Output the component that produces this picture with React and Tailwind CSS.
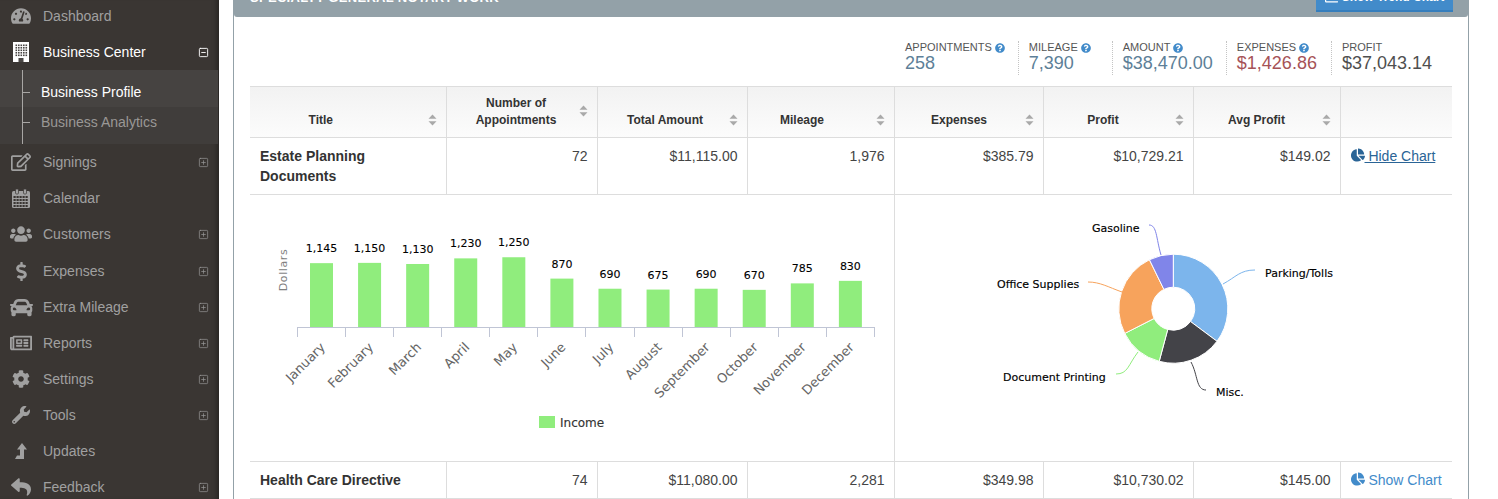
import React from "react";
import {
  FaTachometerAlt, FaRegEdit, FaUsers, FaDollarSign, FaCar,
  FaRegNewspaper, FaCog, FaWrench, FaReply, FaChartPie, FaQuestionCircle, FaRegChartBar,
} from "react-icons/fa";
import { SquarePlus, SquareMinus } from "lucide-react";

const BuildingIcon = () => (
  <svg width="16" height="20" viewBox="0 0 16 20">
    <rect width="16" height="20" fill="#fff" />
    <rect x="2" y="2" width="12" height="13" fill="#fff" />
    {[2.5, 5, 7.5, 10, 12.5].map((y) =>
      [2.5, 5, 7.5, 10, 12.5].map((x) => <rect key={`${x}-${y}`} x={x} y={y} width="1.6" height="1.6" fill="#4a4745" />)
    )}
    <rect x="5.5" y="16" width="5" height="4" fill="#4a4745" />
  </svg>
);

const CalendarIcon = () => (
  <svg width="18" height="19" viewBox="0 0 18 19">
    <rect y="2" width="18" height="17" rx="1.5" fill="currentColor" />
    <rect x="3.5" y="0" width="3" height="5" rx="1" fill="currentColor" stroke="#3a3633" strokeWidth="0.7" />
    <rect x="11.5" y="0" width="3" height="5" rx="1" fill="currentColor" stroke="#3a3633" strokeWidth="0.7" />
    {[7, 10, 13, 16].map((y) =>
      [1.5, 4.5, 7.5, 10.5, 13.5].map((x) => <rect key={`${x}-${y}`} x={x} y={y} width="2.2" height="2" fill="#3a3633" />)
    )}
  </svg>
);

const UpdatesIcon = () => (
  <svg width="12" height="16" viewBox="0 0 12 16">
    <path d="M7 0 L12 6.5 H9 V16 H0 L2 12.5 H5 V6.5 H2 Z" fill="currentColor" />
  </svg>
);

const menuTop = [
  { label: "Dashboard", icon: <FaTachometerAlt size={20} /> },
  { label: "Business Center", icon: <BuildingIcon />, active: true },
];

const menuBottom = [
  { label: "Signings", icon: <FaRegEdit size={20} />, plus: true },
  { label: "Calendar", icon: <CalendarIcon /> },
  { label: "Customers", icon: <FaUsers size={22} />, plus: true, extra: "mb-px" },
  { label: "Expenses", icon: <FaDollarSign size={19} />, plus: true },
  { label: "Extra Mileage", icon: <FaCar size={23} />, plus: true },
  { label: "Reports", icon: <FaRegNewspaper size={22} />, plus: true },
  { label: "Settings", icon: <FaCog size={18} />, plus: true },
  { label: "Tools", icon: <FaWrench size={18} />, plus: true },
  { label: "Updates", icon: <UpdatesIcon /> },
  { label: "Feedback", icon: <FaReply size={20} />, plus: true },
];

const MenuItem = ({ item }) => (
  <div className={`flex h-9 items-center text-sm ${item.active ? "text-white" : "text-[#a0a0a0]"} ${item.extra || ""}`}>
    <span className="flex w-[43px] justify-center pl-px pr-[2px]">{item.icon}</span>
    <span className="flex-1">{item.label}</span>
    {item.active && <SquareMinus size={11} strokeWidth={2} className="mr-[10px]" />}
    {item.plus && <SquarePlus size={11} strokeWidth={1.5} className="mr-[10px] text-[#999]" />}
  </div>
);

const Sidebar = () => (
  <aside className="-mt-[2px] h-[501px] w-[219px] shrink-0 bg-[#3a3633] shadow-[inset_-5px_0_5px_-3px_rgba(0,0,0,0.35)]">
    {menuTop.map((item) => <MenuItem key={item.label} item={item} />)}
    <div className="relative mr-px text-sm">
      <div className="absolute bottom-0 left-[22px] top-0 w-px bg-[#a8a6a4]" />
      <div className="h-[37px] bg-[#464341] pl-[41px] pt-3 leading-5 text-white">
        <span className="absolute left-[22px] top-[22px] h-px w-2 bg-[#a8a6a4]" />
        Business Profile
      </div>
      <div className="h-[37px] bg-[#403d3b] pl-[41px] pt-[5px] leading-5 text-[#9a9896]">
        <span className="absolute left-[22px] top-[52px] h-px w-2 bg-[#a8a6a4]" />
        Business Analytics
      </div>
    </div>
    {menuBottom.map((item) => <MenuItem key={item.label} item={item} />)}
  </aside>
);

const stats = [
  { label: "Appointments", value: "258", color: "text-[#5d7f98]", pr: "pr-[13px]", help: true },
  { label: "Mileage", value: "7,390", color: "text-[#5d7f98]", pr: "pr-[21px]", help: true },
  { label: "Amount", value: "$38,470.00", color: "text-[#5d7f98]", pr: "pr-[13px]", help: true },
  { label: "Expenses", value: "$1,426.86", color: "text-[#a65257]", pr: "pr-[14px]", help: true },
  { label: "Profit", value: "$37,043.14", color: "text-[#4f4f4f]", pr: "pr-[21px]" },
];

const Stats = () => (
  <div className="flex h-[69px] justify-end pt-6">
    {stats.map((s, i) => (
      <div
        key={s.label}
        className={`h-[34px] pl-[10px] ${i > 0 ? "border-l border-dotted border-[#c4c4c4]" : ""} ${s.pr}`}
      >
        <div className="flex items-center gap-[3px] text-[11px] uppercase leading-[13px] text-[#555]">
          {s.label}
          {s.help && <FaQuestionCircle size={10} className="text-[#428bca]" />}
        </div>
        <div className={`text-lg leading-[19px] ${s.color}`}>{s.value}</div>
      </div>
    ))}
  </div>
);

const SortIcon = ({ className }) => (
  <svg width="9" height="12" viewBox="0 0 9 12" className={`absolute right-[9px] ${className}`}>
    <path d="M4.5 0.5 L8.5 4.8 L0.5 4.8 Z M0.5 7.2 L8.5 7.2 L4.5 11.5 Z" fill="#a9a9a9" />
  </svg>
);

const columns = [
  { label: "Title", pr: "pr-[54px]" },
  { label: "Number of Appointments", pr: "pr-[11px]", iconTop: "top-[18px]" },
  { label: "Total Amount", pr: "pr-[14px]" },
  { label: "Mileage", pr: "pr-[37px]" },
  { label: "Expenses", pr: "pr-[19px]" },
  { label: "Profit", pr: "pr-[30px]" },
  { label: "Avg Profit", pr: "pr-[20px]" },
];

const Num = ({ children }) => (
  <td className="border border-[#ddd] px-[9px] pt-2 text-right align-top text-[#444]">{children}</td>
);

const Cell = ({ children }) => (
  <td className="border border-[#ddd] px-[9px] text-right text-[#444]">{children}</td>
);

const bars = [
  ["January", 1145, "1,145"], ["February", 1150, "1,150"], ["March", 1130, "1,130"], ["April", 1230, "1,230"],
  ["May", 1250, "1,250"], ["June", 870, "870"], ["July", 690, "690"], ["August", 675, "675"],
  ["September", 690, "690"], ["October", 670, "670"], ["November", 785, "785"], ["December", 830, "830"],
];

const chartFont = "'DejaVu Sans', sans-serif";

// coordinates in both charts are page pixels, the viewBox moves them into the cell
const BarChart = () => (
  <svg width="644" height="266" viewBox="250 195 644 266" className="block" fontFamily={chartFont}>
    <text
      transform="translate(287 270) rotate(-90)"
      textAnchor="middle"
      fontSize="11"
      letterSpacing="0.6"
      fill="#808080"
    >
      Dollars
    </text>
    {bars.map(([month, value, label], i) => {
      const x = 310 + i * 48.08;
      const h = value * 0.0562;
      const top = 327.5 - h;
      return (
        <g key={month}>
          <rect x={x} y={top} width="23" height={h} fill="#90ed7d" />
          <text x={x + 11.5} y={top - 11} textAnchor="middle" fontSize="11" fill="#000" stroke="#000" strokeWidth="0.1">
            {label}
          </text>
          <text transform={`translate(${x + 16} 348) rotate(-45)`} textAnchor="end" fontSize="13" fill="#666">
            {month}
          </text>
        </g>
      );
    })}
    <path d="M297 327.5 H875" stroke="#c0c5d5" fill="none" />
    {Array.from({ length: 13 }, (_, i) => (
      <path key={i} d={`M${Math.round(297 + i * 48.08) + 0.5} 327 V337`} stroke="#c0c5d5" fill="none" />
    ))}
    <rect x="539" y="416" width="16" height="12" fill="#90ed7d" />
    <text x="560" y="427" fontSize="12" fill="#333" stroke="#333" strokeWidth="0.15">Income</text>
  </svg>
);

const slices = [
  { from: 0, to: 126.7, fill: "#7cb5ec" },
  { from: 126.7, to: 195, fill: "#434348" },
  { from: 195, to: 243, fill: "#90ed7d" },
  { from: 243, to: 334, fill: "#f7a35c" },
  { from: 334, to: 360, fill: "#8085e9" },
];

const point = (angle, r) => {
  const rad = (angle * Math.PI) / 180;
  return `${(1173.3 + r * Math.sin(rad)).toFixed(2)} ${(308.7 - r * Math.cos(rad)).toFixed(2)}`;
};

const slicePath = ({ from, to }) => {
  const large = to - from > 180 ? 1 : 0;
  return `M${point(from, 54.5)} A54.5 54.5 0 ${large} 1 ${point(to, 54.5)} L${point(to, 21.5)} A21.5 21.5 0 ${large} 0 ${point(from, 21.5)} Z`;
};

const pieLabels = [
  { text: "Gasoline", x: 1092, y: 232, d: "M1149 225 C1157 225 1156 238 1161 255", color: "#8085e9" },
  { text: "Parking/Tolls", x: 1265, y: 277, d: "M1255 270 C1240 270 1236 277 1223 284", color: "#7cb5ec" },
  { text: "Office Supplies", x: 997, y: 288, d: "M1088 282 C1100 282 1108 287 1122 292", color: "#f7a35c" },
  { text: "Document Printing", x: 1003, y: 381, d: "M1116 374 C1128 374 1128 365 1138 352", color: "#90ed7d" },
  { text: "Misc.", x: 1216, y: 396, d: "M1206 390 C1196 390 1198 375 1191 362", color: "#434348" },
];

const PieChart = () => (
  <svg width="557" height="266" viewBox="895 195 557 266" className="block" fontFamily={chartFont}>
    {slices.map((s) => (
      <path key={s.fill} d={slicePath(s)} fill={s.fill} stroke="#fff" strokeWidth="1" />
    ))}
    {pieLabels.map((l) => (
      <g key={l.text}>
        <path d={l.d} fill="none" stroke={l.color} strokeWidth="1" />
        <text x={l.x} y={l.y} fontSize="11" fill="#000" stroke="#000" strokeWidth="0.15">{l.text}</text>
      </g>
    ))}
  </svg>
);

const App = () => (
  <div className="flex h-[499px] w-full overflow-hidden bg-white font-['Liberation_Sans',Arial,sans-serif] text-[#333]">
    <Sidebar />
    <main className="ml-[14px] w-[1236px] shrink-0">
      <section className="-mt-[19px] h-[560px] rounded-b-[3px] border border-[#93a1a8]">
        <header className="flex h-[35px] items-end justify-between rounded-b-[3px] bg-[#93a1a8] pb-[5px] pl-4 pr-[15px]">
          <h2 className="self-start pt-[9px] text-[13px] font-bold uppercase leading-[14px] tracking-[0.3px] text-white">
            Specialty General Notary Work
          </h2>
          <button className="flex h-7 w-[137px] items-center justify-center gap-1 border-b-2 border-[#357ebd] bg-[#428bca] text-xs font-bold text-white">
            <FaRegChartBar size={13} />
            Show Trend Chart
          </button>
        </header>
        <div className="pl-4 pr-[15px]">
          <Stats />
          <table className="w-[1202px] table-fixed border-collapse text-sm">
            <colgroup>
              <col className="w-[196px]" />
              <col className="w-[151px]" />
              <col className="w-[150px]" />
              <col className="w-[147px]" />
              <col className="w-[149px]" />
              <col className="w-[150px]" />
              <col className="w-[147px]" />
              <col className="w-[112px]" />
            </colgroup>
            <thead>
              <tr className="h-[51px] bg-linear-to-b from-[#f2f2f2] to-[#fcfcfc]">
                {columns.map((c, i) => (
                  <th
                    key={c.label}
                    className={`relative border border-[#ddd] pb-2 pl-0 pt-[7px] align-bottom text-xs font-bold leading-[17px] text-[#333] ${c.pr} ${i === 0 ? "border-l-0" : ""}`}
                  >
                    {c.label === "Number of Appointments" ? <>Number of<br />Appointments</> : c.label}
                    <SortIcon className={c.iconTop || "top-[27px]"} />
                  </th>
                ))}
                <th className="border border-r-0 border-[#ddd]" />
              </tr>
            </thead>
            <tbody>
              <tr className="h-[57px]">
                <td className="border border-l-0 border-[#ddd] pl-[10px] pr-2 pt-2 align-top font-bold leading-5">
                  Estate Planning Documents
                </td>
                <Num>72</Num>
                <Num>$11,115.00</Num>
                <Num>1,976</Num>
                <Num>$385.79</Num>
                <Num>$10,729.21</Num>
                <Num>$149.02</Num>
                <td className="whitespace-nowrap border border-r-0 border-[#ddd] pl-[10px] pt-2 align-top text-[#2a6496] underline">
                  <FaChartPie size={14} className="inline align-[-1px]" /> Hide Chart
                </td>
              </tr>
              <tr className="h-[267px]">
                <td colSpan={4} className="border border-l-0 border-[#ddd] p-0 align-top"><BarChart /></td>
                <td colSpan={4} className="border border-r-0 border-[#ddd] p-0 align-top"><PieChart /></td>
              </tr>
              <tr className="h-[37px]">
                <td className="border border-l-0 border-[#ddd] pl-[10px] font-bold">Health Care Directive</td>
                <Cell>74</Cell>
                <Cell>$11,080.00</Cell>
                <Cell>2,281</Cell>
                <Cell>$349.98</Cell>
                <Cell>$10,730.02</Cell>
                <Cell>$145.00</Cell>
                <td className="whitespace-nowrap border border-r-0 border-[#ddd] pl-[10px] text-[#428bca]">
                  <FaChartPie size={14} className="inline align-[-1px]" /> Show Chart
                </td>
              </tr>
            </tbody>
          </table>
        </div>
      </section>
    </main>
  </div>
);

export default App;
